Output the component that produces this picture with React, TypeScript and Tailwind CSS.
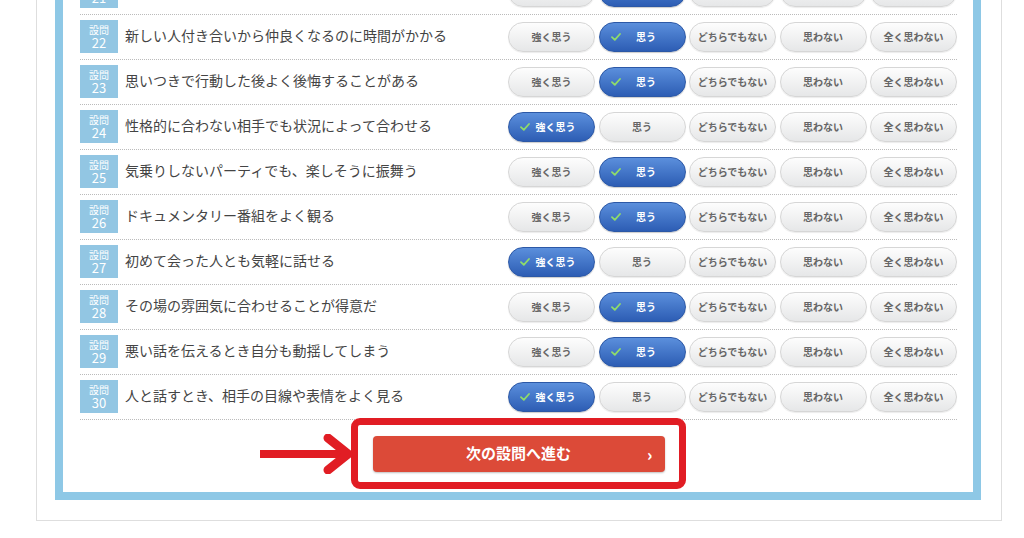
import React from "react";

const choices = ["強く思う", "思う", "どちらでもない", "思わない", "全く思わない"];

const questions = [
  { no: 21, text: "初対面の人とでもすぐに打ち解けられる", pick: 1 },
  { no: 22, text: "新しい人付き合いから仲良くなるのに時間がかかる", pick: 1 },
  { no: 23, text: "思いつきで行動した後よく後悔することがある", pick: 1 },
  { no: 24, text: "性格的に合わない相手でも状況によって合わせる", pick: 0 },
  { no: 25, text: "気乗りしないパーティでも、楽しそうに振舞う", pick: 1 },
  { no: 26, text: "ドキュメンタリー番組をよく観る", pick: 1 },
  { no: 27, text: "初めて会った人とも気軽に話せる", pick: 0 },
  { no: 28, text: "その場の雰囲気に合わせることが得意だ", pick: 1 },
  { no: 29, text: "悪い話を伝えるとき自分も動揺してしまう", pick: 1 },
  { no: 30, text: "人と話すとき、相手の目線や表情をよく見る", pick: 0 },
];

function Check() {
  return (
    <svg width="10" height="8" viewBox="0 0 10 8" className="absolute left-[11px] top-1/2 -translate-y-1/2">
      <polyline points="1,4.2 3.8,6.8 9,1" fill="none" stroke="#8fdc6a" strokeWidth="1.8" strokeLinecap="round" strokeLinejoin="round" />
    </svg>
  );
}

function Choice({ label, active }: { label: string; active: boolean }) {
  return (
    <div
      className={
        active
          ? "relative flex items-center justify-center w-[87px] h-[30px] rounded-full border border-[#2c58a6] bg-gradient-to-b from-[#5b8fdc] to-[#2d5db4] text-white text-[10px] font-bold shadow-[0_1px_1px_rgba(0,0,0,0.2)]"
          : "relative flex items-center justify-center w-[87px] h-[30px] rounded-full border border-[#d6d6d6] bg-gradient-to-b from-[#fdfdfd] to-[#e6e7e8] text-[#666] text-[10px] font-bold shadow-[0_1px_1px_rgba(0,0,0,0.08)]"
      }
    >
      {active && <Check />}
      <span className={active ? "pl-[8px] leading-[12px]" : "leading-[12px]"}>{label}</span>
    </div>
  );
}

function Row({ no, text, pick }: { no: number; text: string; pick: number }) {
  return (
    <div className="flex items-center h-[45px] pb-[1px] border-b border-dotted border-[#bbb]">
      <div className="flex flex-col items-center justify-center w-[38px] h-[33px] bg-[#92c6e3] text-white shrink-0">
        <span className="text-[10px] leading-[11px]">設問</span>
        <span className="text-[13px] leading-[15px]">{no}</span>
      </div>
      <div className="ml-[7px] pb-[4px] text-[14px] leading-[18px] text-[#444] flex-1 truncate">{text}</div>
      <div className="flex gap-[3.5px]">
        {choices.map((c, i) => (
          <Choice key={c} label={c} active={i === pick} />
        ))}
      </div>
    </div>
  );
}

function Arrow() {
  return (
    <svg width="97" height="40" viewBox="0 0 97 40" className="absolute left-[-98px] top-1/2 -translate-y-1/2">
      <line x1="0" y1="20" x2="88" y2="20" stroke="#e11d24" strokeWidth="8" />
      <polyline points="68,4 88,20 68,36" fill="none" stroke="#e11d24" strokeWidth="9" strokeLinecap="round" strokeLinejoin="round" />
    </svg>
  );
}

export default function App() {
  return (
    <div
      className="w-full h-[538px] bg-white overflow-hidden"
      style={{ fontFamily: '"Noto Sans CJK JP", "Noto Sans", sans-serif' }}
    >
      <div className="ml-[36px] w-[966px] -mt-[60px] pt-[22px] pb-[20px] border border-t-0 border-[#dedede]">
        <div className="ml-[18px] w-[926px] border-8 border-[#8ec8e6] bg-white">
          <div className="pl-[17px] pr-[16px] pb-[3px]">
            {questions.map((q) => (
              <Row key={q.no} {...q} />
            ))}
            <div className="flex justify-center -mt-[2px]">
              <div className="relative w-[335px] h-[71px] border-[7px] border-[#e11d24] rounded-[9px] flex items-center justify-center">
                <Arrow />
                <div className="relative flex items-center justify-center w-[292px] h-[36px] rounded-[4px] bg-[#dc4a38] shadow-[0_1px_2px_rgba(0,0,0,0.25)] text-white text-[15px] font-bold">
                  次の設問へ進む
                  <span className="absolute right-[12px] text-[16px] font-black">›</span>
                </div>
              </div>
            </div>
          </div>
        </div>
      </div>
    </div>
  );
}
